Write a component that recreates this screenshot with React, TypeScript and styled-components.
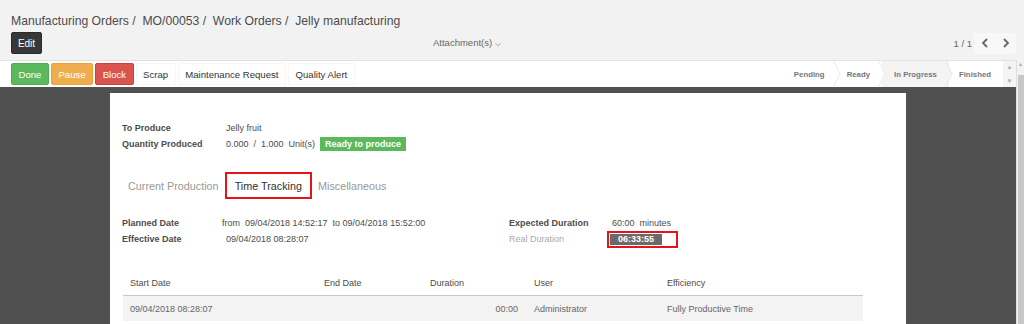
import styled, { createGlobalStyle } from 'styled-components';

const GlobalStyle = createGlobalStyle`
  html, body {
    margin: 0;
    padding: 0;
  }

  body {
    width: 1024px;
    height: 324px;
    overflow: hidden;
    background: #f2f2f2;
    color: #4c4c4c;
    font-family: "Liberation Sans", Arial, sans-serif;
  }
`;

const Page = styled.div`
  display: flex;
  flex-direction: column;
  height: 324px;
`;

const ControlPanel = styled.header`
  height: 60px;
  padding: 12px 8px 0 11px;
  box-sizing: border-box;
`;

const Breadcrumb = styled.div`
  height: 18px;
  font-size: 12.2px;
  line-height: 18px;
  color: #4c4c4c;
  white-space: pre;
`;

const ActionRow = styled.div`
  display: grid;
  grid-template-columns: 422px auto 1fr;
  align-items: center;
  margin-top: 2px;
  height: 22px;
`;

const EditButton = styled.button`
  width: 31px;
  height: 22px;
  padding: 0;
  border: 1px solid #2a2a2a;
  border-radius: 2px;
  background: #383838;
  color: #fff;
  font-family: inherit;
  font-size: 10px;
`;

const Attachment = styled.div`
  font-size: 9.5px;
  color: #666;

  span {
    margin-left: 3px;
    font-size: 8px;
  }
`;

const Pager = styled.div`
  display: flex;
  justify-content: flex-end;
  align-items: center;
  gap: 2px;
  font-size: 9.5px;
  color: #666;
`;

const PagerButtons = styled.div`
  display: flex;
  height: 21px;
  background: #f8f8f8;
  border-radius: 2px;
`;

const PagerButton = styled.div`
  display: flex;
  align-items: center;
  justify-content: center;
  width: 21px;
  color: #666;
`;

const Body = styled.div`
  display: flex;
  flex: 1;
  min-height: 0;
`;

const MainColumn = styled.div`
  display: flex;
  flex-direction: column;
  flex: 1;
  min-width: 0;
`;

const StatusBar = styled.div`
  display: flex;
  align-items: center;
  height: 27px;
  border-top: 1px solid #e2e2e2;
  background: #fff;
  box-sizing: border-box;
`;

const Actions = styled.div`
  display: flex;
  gap: 2px;
  padding-left: 11px;
`;

const ActionButton = styled.button<{ $tone?: 'done' | 'pause' | 'block' }>`
  height: 22px;
  padding: 0 6.5px;
  border: 1px solid
    ${(p) =>
      p.$tone === 'done' ? '#4cae4c' : p.$tone === 'pause' ? '#eea236' : p.$tone === 'block' ? '#d43f3a' : '#f6f6f6'};
  border-radius: 2px;
  background: ${(p) =>
    p.$tone === 'done' ? '#5cb85c' : p.$tone === 'pause' ? '#f0ad4e' : p.$tone === 'block' ? '#d9534f' : '#fff'};
  color: ${(p) => (p.$tone ? '#fff' : '#333')};
  font-family: inherit;
  font-size: 9.6px;
`;

const Stages = styled.div`
  display: flex;
  height: 100%;
  margin-left: auto;
`;

const Stage = styled.div<{ $current?: boolean }>`
  position: relative;
  display: flex;
  align-items: center;
  padding: 0 12px 0 ${(p) => (p.$current ? '12px' : '10px')};
  background: ${(p) => (p.$current ? '#f4f4f4' : '#fff')};
  color: #777;
  font-size: 7.8px;
  font-weight: bold;

  &::after {
    content: '';
    position: absolute;
    right: -6px;
    top: 4px;
    width: 17px;
    height: 17px;
    border-top: 1px solid #e4e4e4;
    border-right: 1px solid #e4e4e4;
    background: inherit;
    transform: scaleX(0.5) rotate(45deg);
    z-index: 1;
  }

  &:last-child::after {
    display: none;
  }
`;

const Spinner = styled.div`
  display: flex;
  flex-direction: column;
  justify-content: space-between;
  align-items: center;
  width: 13px;
  height: 100%;
  padding: 3px 0;
  box-sizing: border-box;
  background: #f4f4f4;
  color: #aaa;
  font-size: 6px;
  line-height: 6px;
`;

const Workspace = styled.main`
  flex: 1;
  min-height: 0;
  padding: 6px 0 0 110px;
  background: #505050;
  overflow: hidden;
`;

const Sheet = styled.section`
  width: 796px;
  height: 100%;
  padding: 27px 12px 0 12px;
  box-sizing: border-box;
  background: #fff;
  font-size: 9px;
`;

const InfoGrid = styled.div`
  display: grid;
  grid-template-columns: 104px auto;
  grid-auto-rows: 16px;
  align-items: center;
`;

const Label = styled.div<{ $muted?: boolean }>`
  font-weight: ${(p) => (p.$muted ? 'normal' : 'bold')};
  color: ${(p) => (p.$muted ? '#aaa' : '#4c4c4c')};
`;

const Value = styled.div<{ $indent?: number }>`
  display: flex;
  align-items: center;
  padding-left: ${(p) => p.$indent ?? 0}px;
  color: #4c4c4c;
  white-space: pre;
`;

const ReadyBadge = styled.span`
  margin-left: 5px;
  padding: 2px 5px;
  background: #5cb85c;
  color: #fff;
  font-weight: bold;
  line-height: 10px;
`;

const Tabs = styled.nav`
  display: flex;
  align-items: center;
  margin-top: 20px;
  height: 27px;
`;

const Tab = styled.div<{ $active?: boolean }>`
  display: flex;
  align-items: center;
  height: 100%;
  padding: 0 ${(p) => (p.$active ? '8px' : '6px')};
  box-sizing: border-box;
  border: ${(p) => (p.$active ? '2px solid #e5141b' : 'none')};
  color: ${(p) => (p.$active ? '#333' : '#999')};
  font-size: 10.8px;
`;

const Columns = styled.div`
  display: grid;
  grid-template-columns: 387px auto;
  margin-top: 16px;
`;

const Group = styled.div<{ $labelWidth: number }>`
  display: grid;
  grid-template-columns: ${(p) => p.$labelWidth}px auto;
  grid-auto-rows: 16px;
  align-items: center;
`;

const HighlightBox = styled.div`
  display: flex;
  align-items: center;
  width: 71px;
  height: 17px;
  margin-left: -5px;
  padding-left: 1px;
  box-sizing: border-box;
  border: 2px solid #e5141b;
`;

const DurationBadge = styled.span`
  display: block;
  width: 52px;
  height: 11px;
  background: #6a6a6a;
  color: #fff;
  font-weight: bold;
  line-height: 11px;
  text-align: center;
`;

const Table = styled.table`
  width: 740px;
  margin: 24px 0 0 1px;
  border-collapse: collapse;
  font-size: 9px;
  table-layout: fixed;

  th {
    height: 24px;
    padding: 0 7px;
    border-bottom: 1px solid #c8c8c8;
    color: #4c4c4c;
    font-weight: normal;
    text-align: left;
  }

  td {
    height: 25px;
    padding: 0 7px;
    background: #f3f3f3;
    color: #666;
  }
`;

const NumberCell = styled.td`
  && {
    padding-right: 9px;
    text-align: right;
  }
`;

const ScrollTrack = styled.div`
  display: flex;
  flex-direction: column;
  align-items: center;
  width: 7px;
  background: #f2f2f2;
  border-left: 1px solid #e0e0e0;
  color: #aaa;
  font-size: 5px;
  line-height: 8px;
`;

const ScrollThumb = styled.div`
  flex: 1;
  width: 6px;
  margin-top: 7px;
  background: #c8c8c8;
`;

const Chevron = ({ dir }: { dir: 'left' | 'right' }) => (
  <svg width="8" height="10" viewBox="0 0 8 10" fill="none" stroke="currentColor" strokeWidth="1.8">
    {dir === 'left' ? <path d="M6 1 L2 5 L6 9" /> : <path d="M2 1 L6 5 L2 9" />}
  </svg>
);

const stages = ['Pending', 'Ready', 'In Progress', 'Finished'];

export default function App() {
  return (
    <Page>
      <GlobalStyle />
      <ControlPanel>
        <Breadcrumb>Manufacturing Orders /  MO/00053 /  Work Orders /  Jelly manufacturing</Breadcrumb>
        <ActionRow>
          <div>
            <EditButton type="button">Edit</EditButton>
          </div>
          <Attachment>
            Attachment(s)
            <span>⌵</span>
          </Attachment>
          <Pager>
            1 / 1
            <PagerButtons>
              <PagerButton>
                <Chevron dir="left" />
              </PagerButton>
              <PagerButton>
                <Chevron dir="right" />
              </PagerButton>
            </PagerButtons>
          </Pager>
        </ActionRow>
      </ControlPanel>
      <Body>
        <MainColumn>
          <StatusBar>
            <Actions>
              <ActionButton $tone="done">Done</ActionButton>
              <ActionButton $tone="pause">Pause</ActionButton>
              <ActionButton $tone="block">Block</ActionButton>
              <ActionButton>Scrap</ActionButton>
              <ActionButton>Maintenance Request</ActionButton>
              <ActionButton>Quality Alert</ActionButton>
            </Actions>
            <Stages>
              {stages.map((s) => (
                <Stage key={s} $current={s === 'In Progress'}>
                  {s}
                </Stage>
              ))}
            </Stages>
            <Spinner>
              <span>▲</span>
              <span>▼</span>
            </Spinner>
          </StatusBar>
          <Workspace>
            <Sheet>
              <InfoGrid>
                <Label>To Produce</Label>
                <Value>Jelly fruit</Value>
                <Label>Quantity Produced</Label>
                <Value>
                  0.000  /  1.000  Unit(s)
                  <ReadyBadge>Ready to produce</ReadyBadge>
                </Value>
              </InfoGrid>
              <Tabs>
                <Tab>Current Production</Tab>
                <Tab $active>Time Tracking</Tab>
                <Tab>Miscellaneous</Tab>
              </Tabs>
              <Columns>
                <Group $labelWidth={100}>
                  <Label>Planned Date</Label>
                  <Value>from  09/04/2018 14:52:17  to 09/04/2018 15:52:00</Value>
                  <Label>Effective Date</Label>
                  <Value $indent={4}>09/04/2018 08:28:07</Value>
                </Group>
                <Group $labelWidth={103}>
                  <Label>Expected Duration</Label>
                  <Value>60:00  minutes</Value>
                  <Label $muted>Real Duration</Label>
                  <Value>
                    <HighlightBox>
                      <DurationBadge>06:33:55</DurationBadge>
                    </HighlightBox>
                  </Value>
                </Group>
              </Columns>
              <Table>
                <colgroup>
                  <col style={{ width: 194 }} />
                  <col style={{ width: 106 }} />
                  <col style={{ width: 104 }} />
                  <col style={{ width: 133 }} />
                  <col />
                </colgroup>
                <thead>
                  <tr>
                    <th>Start Date</th>
                    <th>End Date</th>
                    <th>Duration</th>
                    <th>User</th>
                    <th>Efficiency</th>
                  </tr>
                </thead>
                <tbody>
                  <tr>
                    <td>09/04/2018 08:28:07</td>
                    <td />
                    <NumberCell>00:00</NumberCell>
                    <td>Administrator</td>
                    <td>Fully Productive Time</td>
                  </tr>
                </tbody>
              </Table>
            </Sheet>
          </Workspace>
        </MainColumn>
        <ScrollTrack>
          <span>▲</span>
          <ScrollThumb />
        </ScrollTrack>
      </Body>
    </Page>
  );
}
